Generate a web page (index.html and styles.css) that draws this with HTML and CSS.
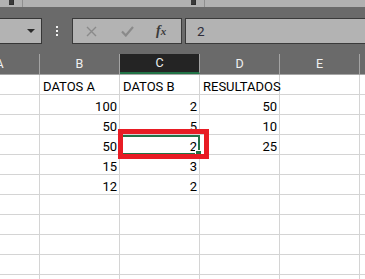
FILE: index.html
```html
<!DOCTYPE html>
<html lang="es">
<head>
  <meta charset="UTF-8" />
  <meta name="viewport" content="width=device-width, initial-scale=1.0"/>
  <title>Libro1 - Excel</title>
  <link rel="stylesheet" href="styles.css">
</head>
<body>
  <div class="ribbon">
    <div class="group group-first">
      <span class="group-label">Portapapeles</span>
      <span class="launcher"></span>
    </div>
    <div class="group group-font">
      <span class="group-label">Fuente</span>
      <span class="launcher"></span>
    </div>
    <div class="group group-align">
      <span class="group-label">Alineación</span>
    </div>
  </div>

  <div class="formula-row">
    <div class="name-box">
      <svg class="caret" width="8" height="4" viewBox="0 0 8 4"><path d="M0 0h8L4 4z" fill="#2b2b2b"/></svg>
    </div>
    <div class="grip">
      <span></span><span></span><span></span>
    </div>
    <div class="fx-buttons">
      <svg class="btn-icon" width="11" height="11" viewBox="0 0 11 11">
        <path d="M1 1l9 9M10 1l-9 9" stroke="#8a8a8a" stroke-width="1.4" fill="none"/>
      </svg>
      <svg class="btn-icon" width="13" height="11" viewBox="0 0 13 11">
        <path d="M1 5.5l3.8 4L12 1" stroke="#8a8a8a" stroke-width="2.2" fill="none"/>
      </svg>
      <span class="fx">f<span class="fx-x">x</span></span>
    </div>
    <div class="formula-input">2</div>
  </div>

  <div class="sheet">
    <div class="row header-row">
      <div class="col-head">A</div>
      <div class="col-head">B</div>
      <div class="col-head active">C</div>
      <div class="col-head">D</div>
      <div class="col-head">E</div>
      <div class="col-head">F</div>
    </div>

    <div class="row">
      <div class="cell"></div>
      <div class="cell">DATOS A</div>
      <div class="cell">DATOS B</div>
      <div class="cell">RESULTADOS</div>
      <div class="cell"></div>
      <div class="cell"></div>
    </div>
    <div class="row">
      <div class="cell"></div>
      <div class="cell num">100</div>
      <div class="cell num">2</div>
      <div class="cell num">50</div>
      <div class="cell"></div>
      <div class="cell"></div>
    </div>
    <div class="row">
      <div class="cell"></div>
      <div class="cell num">50</div>
      <div class="cell num">5</div>
      <div class="cell num">10</div>
      <div class="cell"></div>
      <div class="cell"></div>
    </div>
    <div class="row">
      <div class="cell"></div>
      <div class="cell num">50</div>
      <div class="cell num selected">
        2
        <span class="fill-handle"></span>
        <span class="highlight"></span>
      </div>
      <div class="cell num">25</div>
      <div class="cell"></div>
      <div class="cell"></div>
    </div>
    <div class="row">
      <div class="cell"></div>
      <div class="cell num">15</div>
      <div class="cell num">3</div>
      <div class="cell"></div>
      <div class="cell"></div>
      <div class="cell"></div>
    </div>
    <div class="row">
      <div class="cell"></div>
      <div class="cell num">12</div>
      <div class="cell num">2</div>
      <div class="cell"></div>
      <div class="cell"></div>
      <div class="cell"></div>
    </div>
    <div class="row"><div class="cell"></div><div class="cell"></div><div class="cell"></div><div class="cell"></div><div class="cell"></div><div class="cell"></div></div>
    <div class="row"><div class="cell"></div><div class="cell"></div><div class="cell"></div><div class="cell"></div><div class="cell"></div><div class="cell"></div></div>
    <div class="row"><div class="cell"></div><div class="cell"></div><div class="cell"></div><div class="cell"></div><div class="cell"></div><div class="cell"></div></div>
    <div class="row"><div class="cell"></div><div class="cell"></div><div class="cell"></div><div class="cell"></div><div class="cell"></div><div class="cell"></div></div>
    <div class="row"><div class="cell"></div><div class="cell"></div><div class="cell"></div><div class="cell"></div><div class="cell"></div><div class="cell"></div></div>
  </div>
</body>
</html>
```

FILE: styles.css
```css
body {
  margin: 0;
  width: 365px;
  height: 279px;
  overflow: hidden;
  background: #ffffff;
  font-family: Roboto, 'Liberation Sans', sans-serif;
}

/* Ribbon (cut off at the top) */
.ribbon {
  height: 7px;
  background: #b1b1b1;
  display: flex;
  overflow: hidden;
}

.group {
  position: relative;
  height: 7px;
  border-right: 1px solid #8e8e8e;
  box-sizing: border-box;
}

.group-first {
  width: 26px;
}

.group-font {
  width: 206px;
}

.group-align {
  flex: 1;
  border-right: none;
}

.group-label {
  display: block;
  margin-top: -10px;
  font-size: 12px;
  line-height: 13px;
  color: #262626;
  white-space: nowrap;
}

.group-first .group-label {
  margin-left: -70px;
}

.group-font .group-label {
  text-align: center;
  margin-left: -12px;
}

.group-align .group-label {
  margin-left: 104px;
}

.launcher {
  position: absolute;
  right: 8px;
  top: 0;
  width: 4px;
  height: 4px;
  border-right: 1px solid #2e2e2e;
  border-bottom: 1px solid #2e2e2e;
  background: #3a3a3a;
}

/* Formula bar */
.formula-row {
  background: #6a6a6a;
  display: flex;
  align-items: center;
  padding: 11px 0 10px 0;
}

.name-box {
  width: 42px;
  height: 26px;
  box-sizing: border-box;
  background: #b3b3b3;
  border: 1px solid #363636;
  border-left: none;
  display: flex;
  align-items: center;
  justify-content: flex-end;
  padding-right: 6px;
}

.caret {
  margin-top: -1px;
}

.grip {
  width: 30px;
  display: flex;
  flex-direction: column;
  align-items: center;
  gap: 2px;
}

.grip span {
  width: 2px;
  height: 2px;
  background: #f2f2f2;
}

.fx-buttons {
  width: 110px;
  height: 26px;
  box-sizing: border-box;
  background: #b3b3b3;
  border: 1px solid #3a3a3a;
  display: flex;
  align-items: center;
  padding-left: 13px;
  gap: 24px;
}

.fx {
  font-family: 'Liberation Serif', serif;
  font-style: italic;
  font-weight: bold;
  font-size: 14px;
  color: #3a3a3a;
  margin-left: -2px;
}

.fx-x {
  font-size: 11px;
}

.formula-input {
  flex: 1;
  height: 26px;
  box-sizing: border-box;
  margin-left: 3px;
  background: #b3b3b3;
  border: 1px solid #3a3a3a;
  border-right: none;
  padding-left: 11px;
  font-size: 13.5px;
  line-height: 24px;
  color: #2d2d3a;
}

/* Sheet grid */
.sheet {
  margin-left: -40px;
}

.row {
  display: flex;
  height: 20px;
}

.header-row {
  background: #6a6a6a;
  border-bottom: 1px solid #a6a6a6;
}

.col-head {
  width: 80px;
  flex: none;
  box-sizing: border-box;
  border-right: 1px solid #a3a3a3;
  text-align: center;
  font-size: 12.5px;
  line-height: 20px;
  color: #f0f0f0;
}

.col-head.active {
  background: #242424;
  border-bottom: 2px solid #217346;
  line-height: 18px;
}

.cell {
  width: 80px;
  flex: none;
  box-sizing: border-box;
  border-right: 1px solid #d4d4d4;
  border-bottom: 1px solid #d4d4d4;
  padding: 0 2px 0 3px;
  font-size: 13px;
  line-height: 17px;
  padding-top: 3px;
  color: #000000;
  white-space: nowrap;
}

.cell.num {
  text-align: right;
}

.cell.selected {
  position: relative;
  border: 2px solid #217346;
  border-left-width: 0;
  line-height: 15px;
  padding-top: 2px;
  padding-right: 1px;
}

.fill-handle {
  position: absolute;
  right: -4px;
  bottom: -4px;
  width: 5px;
  height: 5px;
  background: #217346;
  border: 1px solid #ffffff;
}

.highlight {
  position: absolute;
  left: -2px;
  top: -8px;
  width: 91px;
  height: 30px;
  box-sizing: border-box;
  border: 5px solid #e81c24;
}
```
